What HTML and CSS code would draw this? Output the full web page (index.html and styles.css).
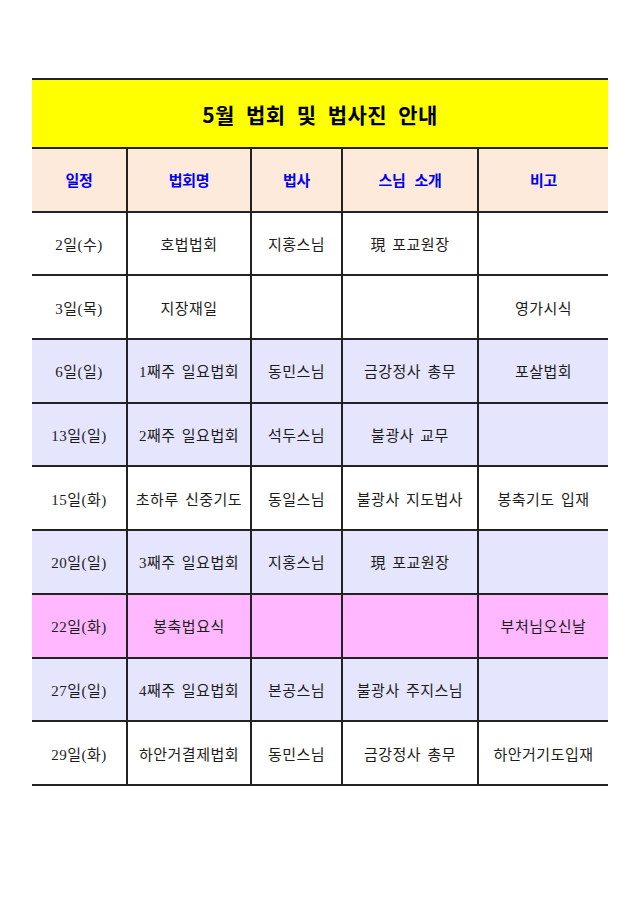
FILE: index.html
```html
<!DOCTYPE html>
<html lang="ko">
<head>
<meta charset="utf-8">
<title>5월 법회 및 법사진 안내</title>
<link rel="stylesheet" href="styles.css">
</head>
<body>
<div class="page">
  <table class="sched">
    <colgroup>
      <col class="c1"><col class="c2"><col class="c3"><col class="c4"><col class="c5">
    </colgroup>
    <tr class="title"><td colspan="5">5월 법회 및 법사진 안내</td></tr>
    <tr class="head">
      <td>일정</td><td>법회명</td><td>법사</td><td>스님 소개</td><td>비고</td>
    </tr>
    <tr><td>2일(수)</td><td>호법법회</td><td>지홍스님</td><td>現 포교원장</td><td></td></tr>
    <tr><td>3일(목)</td><td>지장재일</td><td></td><td></td><td>영가시식</td></tr>
    <tr class="lav"><td>6일(일)</td><td>1째주 일요법회</td><td>동민스님</td><td>금강정사 총무</td><td>포살법회</td></tr>
    <tr class="lav"><td>13일(일)</td><td>2째주 일요법회</td><td>석두스님</td><td>불광사 교무</td><td></td></tr>
    <tr><td>15일(화)</td><td>초하루 신중기도</td><td>동일스님</td><td>불광사 지도법사</td><td>봉축기도 입재</td></tr>
    <tr class="lav"><td>20일(일)</td><td>3째주 일요법회</td><td>지홍스님</td><td>現 포교원장</td><td></td></tr>
    <tr class="pink"><td>22일(화)</td><td>봉축법요식</td><td></td><td></td><td>부처님오신날</td></tr>
    <tr class="lav"><td>27일(일)</td><td>4째주 일요법회</td><td>본공스님</td><td>불광사 주지스님</td><td></td></tr>
    <tr><td>29일(화)</td><td>하안거결제법회</td><td>동민스님</td><td>금강정사 총무</td><td>하안거기도입재</td></tr>
  </table>
</div>
</body>
</html>
```
FILE: styles.css
```css
html, body {
  margin: 0;
  padding: 0;
  background: #ffffff;
}
.page {
  padding: 78px 0 0 32px;
}
.sched {
  border-collapse: collapse;
  table-layout: fixed;
  width: 576px;
  font-family: "Liberation Serif", "Noto Sans CJK KR", serif;
  font-size: 15px;
  color: #1c1c1c;
  letter-spacing: 0.5px;
  word-spacing: 2px;
}
.c1 { width: 95px; }
.c2 { width: 124px; }
.c3 { width: 91px; }
.c4 { width: 136px; }
.c5 { width: 130px; }
.sched td {
  height: 61.7px;
  padding: 0;
  text-align: center;
  vertical-align: middle;
  border-bottom: 2px solid #222;
  border-left: 2px solid #222;
  white-space: nowrap;
}
.sched td:first-child {
  border-left: none;
}
.sched tr.title td {
  height: 67px;
  background: #ffff00;
  border-top: 2px solid #222;
  font-family: "Noto Sans CJK KR", sans-serif;
  font-weight: 700;
  font-size: 21px;
  color: #000;
  letter-spacing: 0.4px;
  word-spacing: 5px;
}
.sched tr.head td {
  background: #fdeada;
  font-family: "Noto Sans CJK KR", sans-serif;
  font-weight: 700;
  font-size: 15px;
  color: #0000f0;
  letter-spacing: -0.3px;
  word-spacing: 5px;
}
.sched tr.lav td {
  background: #e5e5fd;
}
.sched tr.pink td {
  background: #ffb8ff;
}
```
